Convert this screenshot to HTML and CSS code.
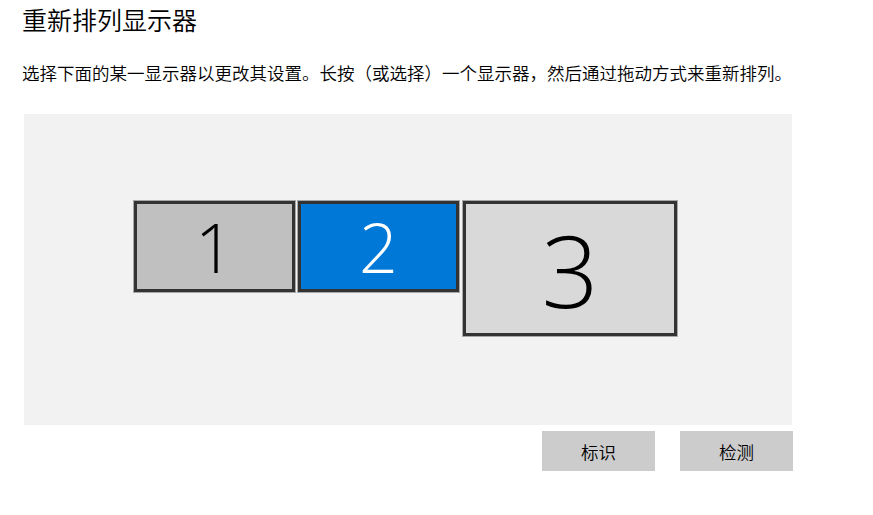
FILE: index.html
```html
<!DOCTYPE html>
<html lang="zh-CN">
<head>
<meta charset="utf-8">
<title>重新排列显示器</title>
<link rel="stylesheet" href="styles.css">
</head>
<body>
<main class="page">
  <h1 class="title">重新排列显示器</h1>
  <p class="desc">选择下面的某一显示器以更改其设置。长按（或选择）一个显示器，然后通过拖动方式来重新排列。</p>
  <section class="canvas">
    <div class="monitor m1">1</div>
    <div class="monitor m2 selected">2</div>
    <div class="monitor m3">3</div>
  </section>
  <div class="actions">
    <button class="btn">标识</button>
    <button class="btn">检测</button>
  </div>
</main>
</body>
</html>
```

FILE: styles.css
```css
html, body {
  margin: 0;
  padding: 0;
  background: #ffffff;
}

.page {
  padding: 4px 0 0 22px;
  font-family: "Noto Sans CJK SC", "Noto Sans", sans-serif;
  color: #000;
}

.title {
  margin: 0;
  font-size: 25px;
  line-height: 30px;
  font-weight: 350;
}

.desc {
  margin: 27px 0 0 0;
  font-size: 17.5px;
  line-height: 24px;
  font-weight: 350;
  white-space: nowrap;
}

.canvas {
  position: relative;
  margin: 29px 0 0 2px;
  width: 768px;
  height: 311px;
  background: #f2f2f2;
}

.monitor {
  position: absolute;
  box-sizing: border-box;
  border: 3px solid #333333;
  box-shadow: 0 0 0 1px #a8a8a8;
  display: flex;
  align-items: center;
  justify-content: center;
  font-family: "Open Sans", "Lato", sans-serif;
  font-weight: 300;
  color: #000;
}

.m1 {
  left: 110px;
  top: 87px;
  width: 161px;
  height: 91px;
  background: #c0c0c0;
  font-size: 68px;
}

.m2 {
  left: 274px;
  top: 87px;
  width: 161px;
  height: 91px;
  background: #0078d7;
  color: #fff;
  font-size: 68px;
}

.m3 {
  left: 439px;
  top: 87px;
  width: 214px;
  height: 135px;
  background: #d9d9d9;
  font-size: 100px;
}

.actions {
  display: flex;
  justify-content: flex-end;
  gap: 25px;
  width: 771px;
  margin-top: 6px;
}

.btn {
  width: 113px;
  height: 40px;
  border: none;
  padding: 0;
  background: #cccccc;
  font-family: "Noto Sans CJK SC", "Noto Sans", sans-serif;
  font-size: 17.5px;
  font-weight: 350;
  color: #000;
}
```
